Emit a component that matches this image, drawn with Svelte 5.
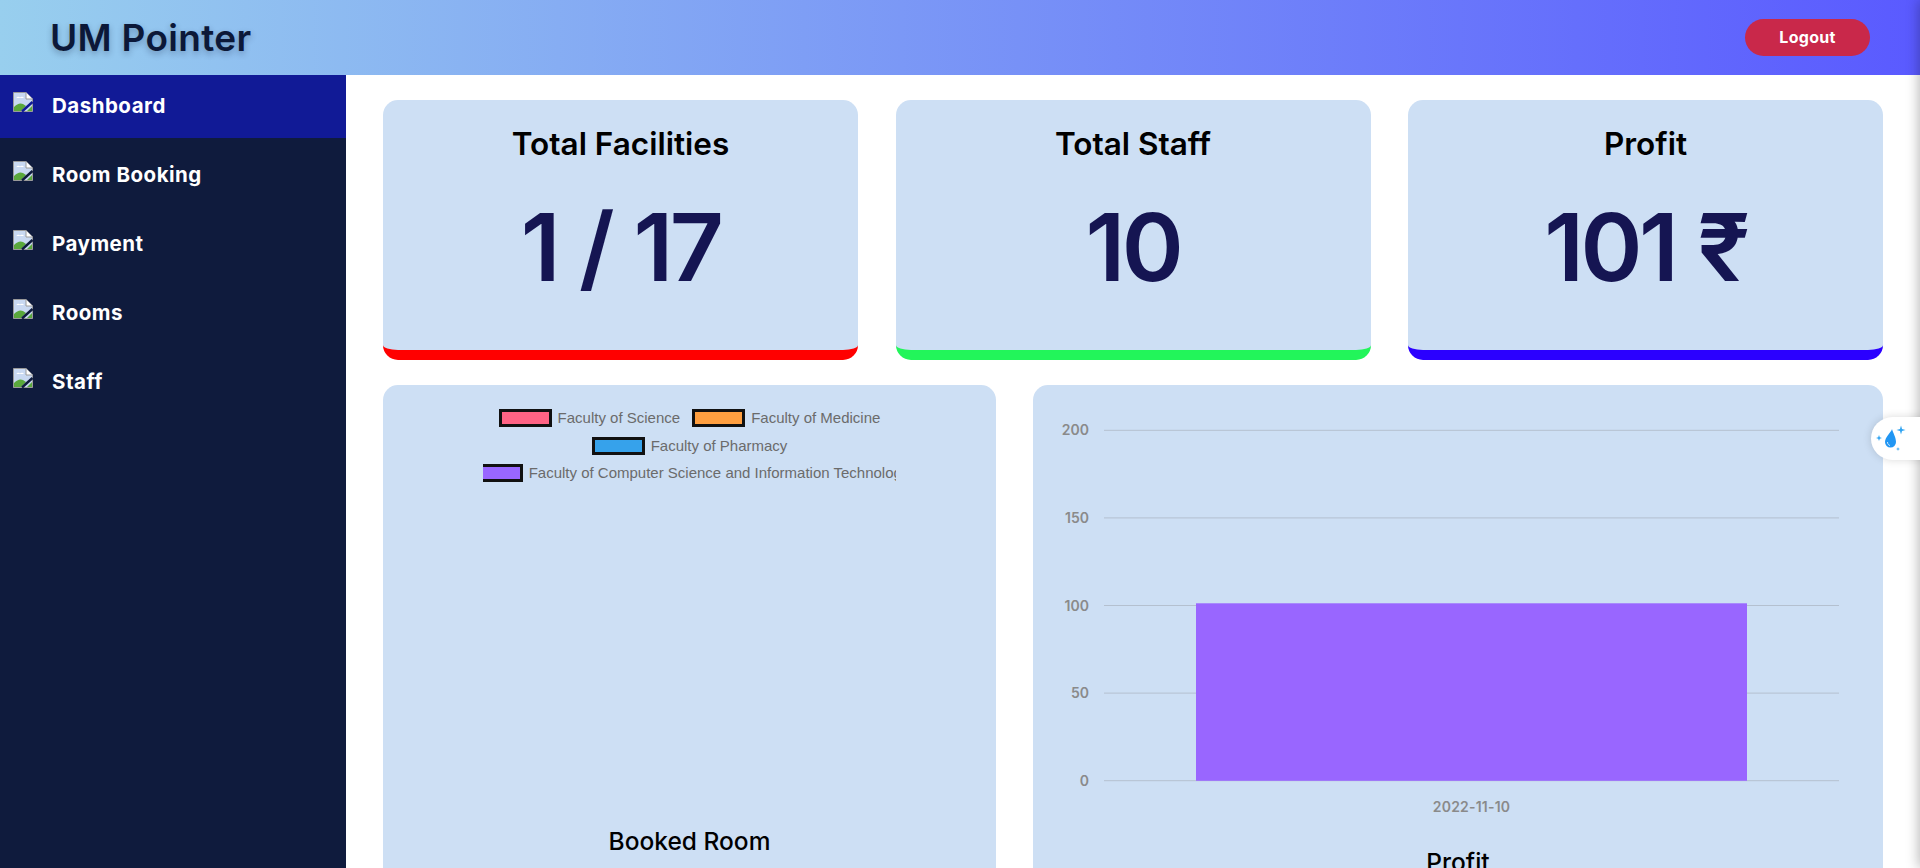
<script>
  const nav = ['Dashboard', 'Room Booking', 'Payment', 'Rooms', 'Staff'];
  const cards = [
    { title: 'Total Facilities', value: '1 / 17', color: '#ff0000' },
    { title: 'Total Staff', value: '10', color: '#22f55a' },
    { title: 'Profit', value: '101 ₹', color: '#2b00ff' }
  ];
  const legendRows = [
    [{ label: 'Faculty of Science', color: '#ff6384' }, { label: 'Faculty of Medicine', color: '#ff9f40' }],
    [{ label: 'Faculty of Pharmacy', color: '#36a2eb' }],
    [{ label: 'Faculty of Computer Science and Information Technology', color: '#9966ff' }]
  ];
  const ticks = [200, 150, 100, 50, 0];
</script>

<div class="page">
  <header class="topbar">
    <h1>UM Pointer</h1>
    <button class="logout">Logout</button>
  </header>
  <div class="body">
    <nav class="sidebar">
      {#each nav as item, i}
        <div class="nav-item" class:active={i === 0}>
          <svg class="broken" width="20" height="20" viewBox="0 0 20 20">
            <path d="M0.5 0.5H13L19.5 7V19.5H0.5Z" fill="#c9d9f2" stroke="#9a9a9a" />
            <path d="M13 0.5V7H19.5" fill="#fff" stroke="#9a9a9a" />
            <path d="M3 6.5c1-2 3-2 4-1 1-1 3-1 4 .5H3Z" fill="#fff" />
            <path d="M1 19v-4c3-3 6-4.500 9-3l3 2-5 5Z" fill="#5aa83c" />
            <path d="M14 19l5-5v5Z" fill="#5aa83c" />
            <path d="M9 19.500 19.500 10" stroke={i === 0 ? '#111a96' : '#0f1b3d'} stroke-width="2.500" />
          </svg>
          <span>{item}</span>
        </div>
      {/each}
    </nav>
    <main class="content">
      <section class="cards">
        {#each cards as card}
          <article class="card" style="border-bottom-color: {card.color}">
            <h2>{card.title}</h2>
            <div class="value">{card.value}</div>
          </article>
        {/each}
      </section>
      <section class="charts">
        <article class="panel donut">
          <div class="legend">
            {#each legendRows as row}
              <div class="legend-row">
                {#each row as entry}
                  <span class="entry">
                    <i class="swatch" style="background: {entry.color}"></i>{entry.label}
                  </span>
                {/each}
              </div>
            {/each}
          </div>
          <h3>Booked Room</h3>
        </article>
        <article class="panel bars">
          <svg class="chart" width="850" height="440" viewBox="0 0 850 440">
            {#each ticks as t, i}
              <line x1="71" x2="806" y1={45.3 + i * 87.6} y2={45.3 + i * 87.6} stroke="#b4c0cf" stroke-width="1" />
              <text x="56" y={45.3 + i * 87.6 + 5} text-anchor="end" class="tick">{t}</text>
            {/each}
            <rect x="163" y="218.3" width="551" height="177.5" fill="#9966ff" />
            <text x="438.500" y="427" text-anchor="middle" class="tick date">2022-11-10</text>
          </svg>
          <h3>Profit</h3>
        </article>
      </section>
    </main>
  </div>
  <div class="edge"></div>
  <div class="widget">
    <svg width="34" height="30" viewBox="0 0 34 30">
      <path d="M17 5c-.5 3-7 8-7 13a5.500 5.500 0 0 0 11 0c0-5-3-9-4-13Z" fill="#2196f3" />
      <path d="M12.500 18c0 2 1 3 2.500 3.500" stroke="#cfe8ff" stroke-width="1" fill="none" />
      <path d="M26 1.500l1 3.500 3.500 1-3.500 1-1 3.500-1-3.500-3.500-1 3.500-1Z" fill="#2ea3f2" />
      <path d="M4 11l.8 2.200 2.200.8-2.200.8L4 17l-.8-2.200L1 14l2.200-.8Z" fill="#2ea3f2" />
      <path d="M23 23l.5 1.500 1.500.5-1.500.5L23 27l-.5-1.500L21 25l1.500-.5Z" fill="#2ea3f2" />
    </svg>
  </div>
</div>

<style>
  :global(body) {
    margin: 0;
    overflow: hidden;
    background: #fff;
  }
  .page {
    position: relative;
    width: 1920px;
    height: 868px;
    overflow: hidden;
    font-family: Inter, "Liberation Sans", sans-serif;
  }
  .topbar {
    height: 75px;
    box-sizing: border-box;
    display: flex;
    align-items: center;
    justify-content: space-between;
    padding: 0 50px 0 50px;
    background: linear-gradient(90deg, #98cfee 0%, #5a5aff 100%);
  }
  h1 {
    margin: 0 0 1px;
    font-size: 37px;
    line-height: 1;
    font-weight: 600;
    letter-spacing: 0.3px;
    color: #0c1838;
    text-shadow: 0 3px 6px rgba(15, 27, 61, 0.3);
  }
  .logout {
    width: 125px;
    height: 37px;
    margin-bottom: 1px;
    border: 0;
    border-radius: 19px;
    background: #c9284a;
    color: #fff;
    font: 700 16px Inter, sans-serif;
    letter-spacing: 0.3px;
  }
  .body {
    display: flex;
    height: 793px;
  }
  .sidebar {
    width: 346px;
    flex: none;
    background: #0f1b3d;
    display: flex;
    flex-direction: column;
  }
  .nav-item {
    height: 69px;
    box-sizing: border-box;
    display: flex;
    align-items: flex-start;
    padding: 16px 0 0 13px;
    color: #fff;
    font-size: 20.500px;
    font-weight: 700;
    letter-spacing: 0.5px;
  }
  .nav-item.active {
    height: 63px;
    margin-bottom: 6px;
    background: #111a96;
  }
  .nav-item span {
    margin: 2px 0 0 19px;
    line-height: 26px;
  }
  .broken {
    flex: none;
    margin-top: 1px;
  }
  .content {
    flex: 1;
    min-width: 0;
    padding: 25px 37px 0;
    display: flex;
    flex-direction: column;
    gap: 25px;
  }
  .cards {
    display: grid;
    grid-template-columns: repeat(3, 475px);
    justify-content: space-between;
  }
  .card {
    height: 260px;
    box-sizing: border-box;
    background: #cddff4;
    border-bottom: 10px solid;
    border-radius: 15px;
    text-align: center;
  }
  h2 {
    margin: 0;
    padding-top: 24px;
    font-size: 31.500px;
    line-height: 40px;
    font-weight: 600;
    color: #000;
  }
  .value {
    margin-top: 23px;
    font-size: 94px;
    line-height: 120px;
    font-weight: 600;
    letter-spacing: -3.500px;
    word-spacing: 2px;
    color: #151552;
  }
  .charts {
    display: grid;
    grid-template-columns: 613px 850px;
    justify-content: space-between;
  }
  .panel {
    height: 520px;
    background: #cddff4;
    border-radius: 15px;
    position: relative;
    text-align: center;
  }
  .legend {
    width: 413px;
    margin-left: 100px;
    padding-top: 24px;
    overflow: hidden;
    font: 15px/18px "Liberation Sans", Arial, sans-serif;
    color: #6b6b6b;
  }
  .legend-row {
    display: flex;
    justify-content: center;
    gap: 12px;
    height: 18px;
    margin-bottom: 9.500px;
    white-space: nowrap;
  }
  .entry {
    display: flex;
    align-items: center;
    flex: none;
  }
  .swatch {
    width: 53px;
    height: 18px;
    box-sizing: border-box;
    border: 3px solid #111;
    margin-right: 6px;
  }
  h3 {
    margin: 0;
    position: absolute;
    left: 0;
    right: 0;
    font-size: 24.500px;
    line-height: 30px;
    font-weight: 500;
    color: #000;
  }
  .donut h3 {
    top: 441px;
  }
  .bars h3 {
    top: 462px;
  }
  .chart {
    display: block;
  }
  .tick {
    font: 600 14px Inter, sans-serif;
    fill: #8a8a8a;
  }
  .date {
    letter-spacing: 0.2px;
  }
  .edge {
    position: absolute;
    top: 0;
    right: -12px;
    width: 12px;
    height: 100%;
    box-shadow: 0 0 14px rgba(0, 0, 0, 0.35);
  }
  .widget {
    position: absolute;
    top: 417px;
    left: 1871px;
    width: 60px;
    height: 43px;
    background: #fff;
    border-radius: 22px 0 0 22px;
    box-shadow: 0 0 8px rgba(0, 0, 0, 0.15);
    display: flex;
    align-items: center;
    padding-left: 4px;
    box-sizing: border-box;
  }
</style>
